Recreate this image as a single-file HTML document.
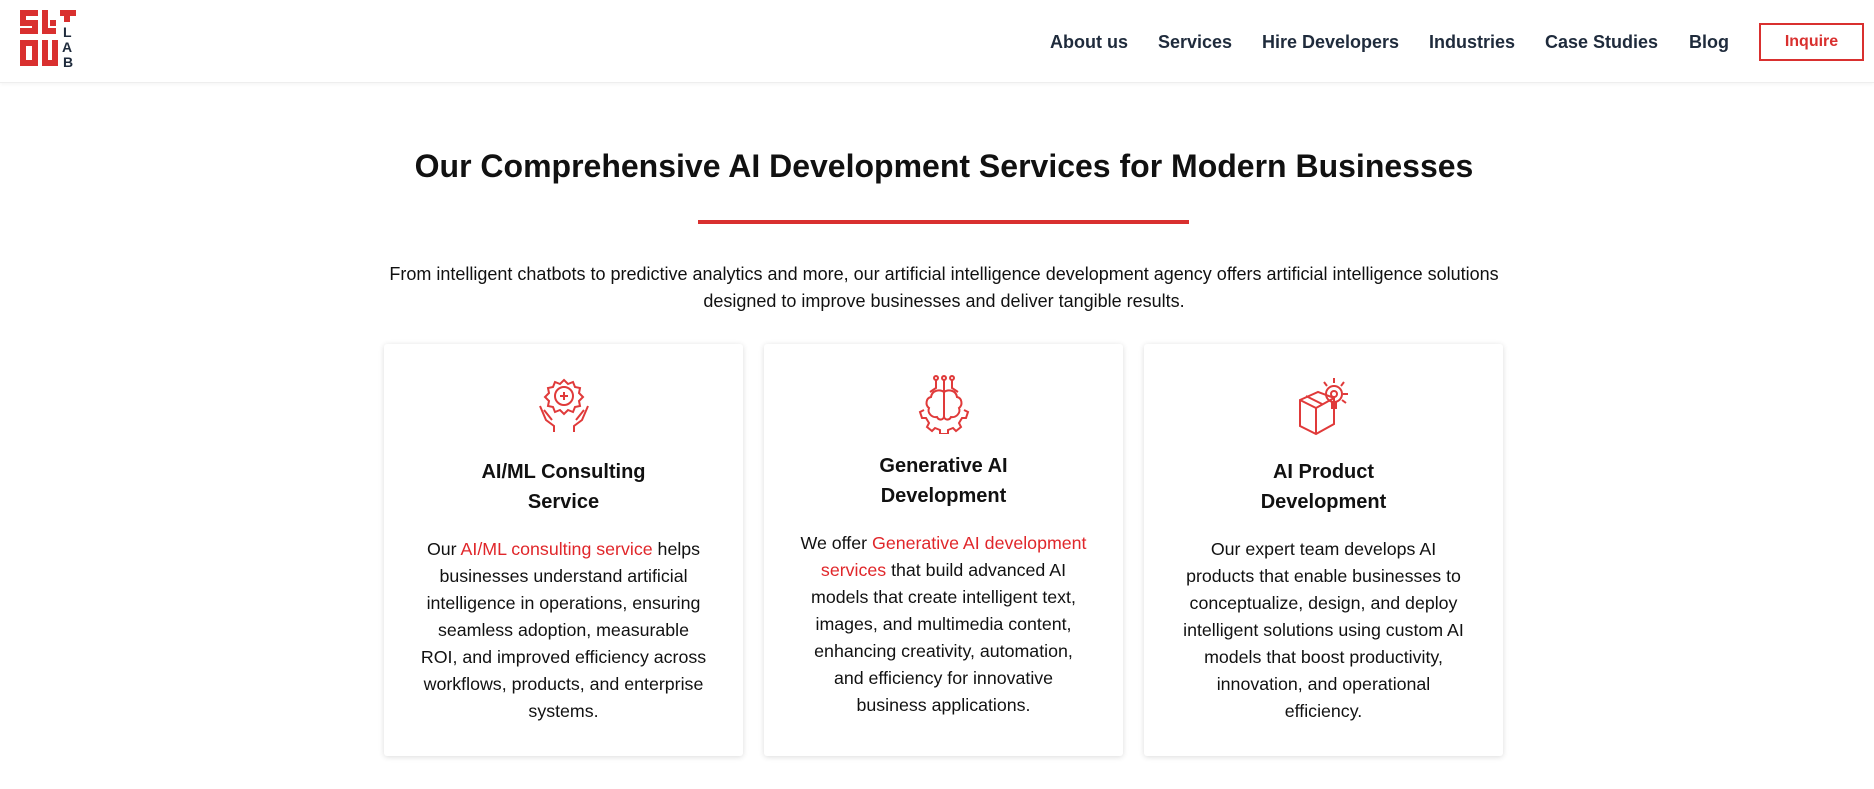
<!DOCTYPE html>
<html><head><meta charset="utf-8">
<style>
*{margin:0;padding:0;box-sizing:border-box}
body{width:1874px;height:789px;background:#fff;font-family:"Liberation Sans",Arial,sans-serif;position:relative;overflow:hidden;color:#111}
.hdr{position:absolute;left:0;top:0;width:1874px;height:83px;border-bottom:1px solid #eee;box-shadow:0 1px 4px rgba(0,0,0,.05)}
.nav{position:absolute;top:32px;font-size:18px;font-weight:bold;color:#1f2b3c;white-space:nowrap}
.btn{position:absolute;left:1759px;top:23px;width:105px;height:38px;border:2px solid #d9302f;color:#d9302f;font-weight:bold;font-size:16px;text-align:center;line-height:34px}
h1{position:absolute;left:0;width:1888px;top:148px;text-align:center;font-size:32px;font-weight:bold;color:#111}
.bar{position:absolute;left:698px;top:220px;width:491px;height:4px;background:#d9302f}
.intro{position:absolute;left:330px;width:1228px;top:261px;text-align:center;font-size:18px;line-height:27px;color:#111}
.card{position:absolute;top:344px;width:359px;height:412px;background:#fff;border-radius:3px;box-shadow:0 1px 6px rgba(0,0,0,.14)}
.ct{position:absolute;left:0;width:100%;text-align:center;font-size:20px;font-weight:bold;line-height:30px;color:#111}
.cb{position:absolute;left:0;width:100%;text-align:center;font-size:17.8px;line-height:27px;white-space:nowrap;color:#111}
.r{color:#e0262a}
svg{position:absolute}
</style></head><body>
<div class="hdr">
<svg style="left:20px;top:10px" width="58" height="58" viewBox="0 0 58 58">
<g fill="#d9302f">
<rect x="0" y="0" width="18" height="6"/><rect x="0" y="0" width="6" height="14"/><rect x="0" y="10" width="18" height="6"/><rect x="12" y="10" width="6" height="14"/><rect x="0" y="18" width="18" height="6"/>
<rect x="22" y="0" width="6" height="24"/><rect x="22" y="18" width="14" height="6"/><rect x="30" y="10" width="6" height="6"/>
<rect x="40" y="0" width="16" height="6"/><rect x="44" y="0" width="6" height="12"/>
<rect x="0" y="30" width="6" height="26"/><rect x="0" y="30" width="16" height="6"/><rect x="12" y="30" width="6" height="26"/><rect x="0" y="50" width="18" height="6"/>
<rect x="22" y="30" width="6" height="26"/><rect x="32" y="30" width="6" height="26"/><rect x="22" y="50" width="16" height="6"/>
</g>
<g fill="#1f2b3c" font-size="14" font-weight="bold" font-family="Liberation Sans,sans-serif"><text x="43" y="27">L</text><text x="42" y="42">A</text><text x="43" y="57">B</text></g>
</svg>
<div class="nav" style="left:1050px">About us</div>
<div class="nav" style="left:1158px">Services</div>
<div class="nav" style="left:1262px">Hire Developers</div>
<div class="nav" style="left:1429px">Industries</div>
<div class="nav" style="left:1545px">Case Studies</div>
<div class="nav" style="left:1689px">Blog</div>
<div class="btn">Inquire</div>
</div>

<h1>Our Comprehensive AI Development Services for Modern Businesses</h1>
<div class="bar"></div>
<div class="intro">From intelligent chatbots to predictive analytics and more, our artificial intelligence development agency offers artificial intelligence solutions<br>designed to improve businesses and deliver tangible results.</div>

<div class="card" style="left:384px">
<svg style="left:150px;top:32px" width="60" height="60" viewBox="0 0 60 60" fill="none" stroke="#e03a3a" stroke-width="2">
<path d="M30 4l4 4 5-2 2 5 5 1-1 5 4 4-4 4 1 5-5 1-2 5-5-2-4 4-4-4-5 2-2-5-5-1 1-5-4-4 4-4-1-5 5-1 2-5 5 2z"/>
<circle cx="30" cy="20" r="9"/><path d="M26 20h8M30 16v8"/>
<path d="M6 30l6 14 8 6v6M54 30l-6 14-8 6v6M10 34l8 10M50 34l-8 10"/>
</svg>
<div class="ct" style="top:113px">AI/ML Consulting<br>Service</div>
<div class="cb" style="top:192px">Our <span class="r">AI/ML consulting service</span> helps<br>businesses understand artificial<br>intelligence in operations, ensuring<br>seamless adoption, measurable<br>ROI, and improved efficiency across<br>workflows, products, and enterprise<br>systems.</div>
</div>

<div class="card" style="left:764px">
<svg style="left:150px;top:30px" width="60" height="60" viewBox="0 0 60 60" fill="none" stroke="#e03a3a" stroke-width="2">
<circle cx="22" cy="4" r="2"/><circle cx="30" cy="4" r="2"/><circle cx="38" cy="4" r="2"/>
<path d="M22 6v8l-6 4M30 6v12M38 6v8l6 4"/>
<path d="M30 18c-4-3-12-2-13 5-5 1-6 8-2 11-2 5 3 10 8 9 2 4 7 3 7-1zM30 18c4-3 12-2 13 5 5 1 6 8 2 11 2 5-3 10-8 9-2 4-7 3-7-1z"/>
<path d="M10 36l-4 2 2 6 4 0 3 5-2 4 5 4 3-3 5 2v4h8v-4l5-2 3 3 5-4-2-4 3-5h4l2-6-4-2"/>
</svg>
<div class="ct" style="top:107px">Generative AI<br>Development</div>
<div class="cb" style="top:186px">We offer <span class="r">Generative AI development</span><br><span class="r">services</span> that build advanced AI<br>models that create intelligent text,<br>images, and multimedia content,<br>enhancing creativity, automation,<br>and efficiency for innovative<br>business applications.</div>
</div>

<div class="card" style="left:1144px">
<svg style="left:150px;top:32px" width="60" height="60" viewBox="0 0 60 60" fill="none" stroke="#e03a3a" stroke-width="2">
<path d="M6 24l18-8 16 6v26l-18 10-16-8z"/><path d="M6 24l16 8 18-10M22 32v26M12 20l16 8"/>
<circle cx="40" cy="18" r="8"/><circle cx="40" cy="18" r="3"/><path d="M38 26v6h4v-6"/>
<path d="M40 2v5M30 6l3 4M50 6l-3 4M54 18h-5M48 24l4 3"/>
</svg>
<div class="ct" style="top:113px">AI Product<br>Development</div>
<div class="cb" style="top:192px">Our expert team develops AI<br>products that enable businesses to<br>conceptualize, design, and deploy<br>intelligent solutions using custom AI<br>models that boost productivity,<br>innovation, and operational<br>efficiency.</div>
</div>
</body></html>
